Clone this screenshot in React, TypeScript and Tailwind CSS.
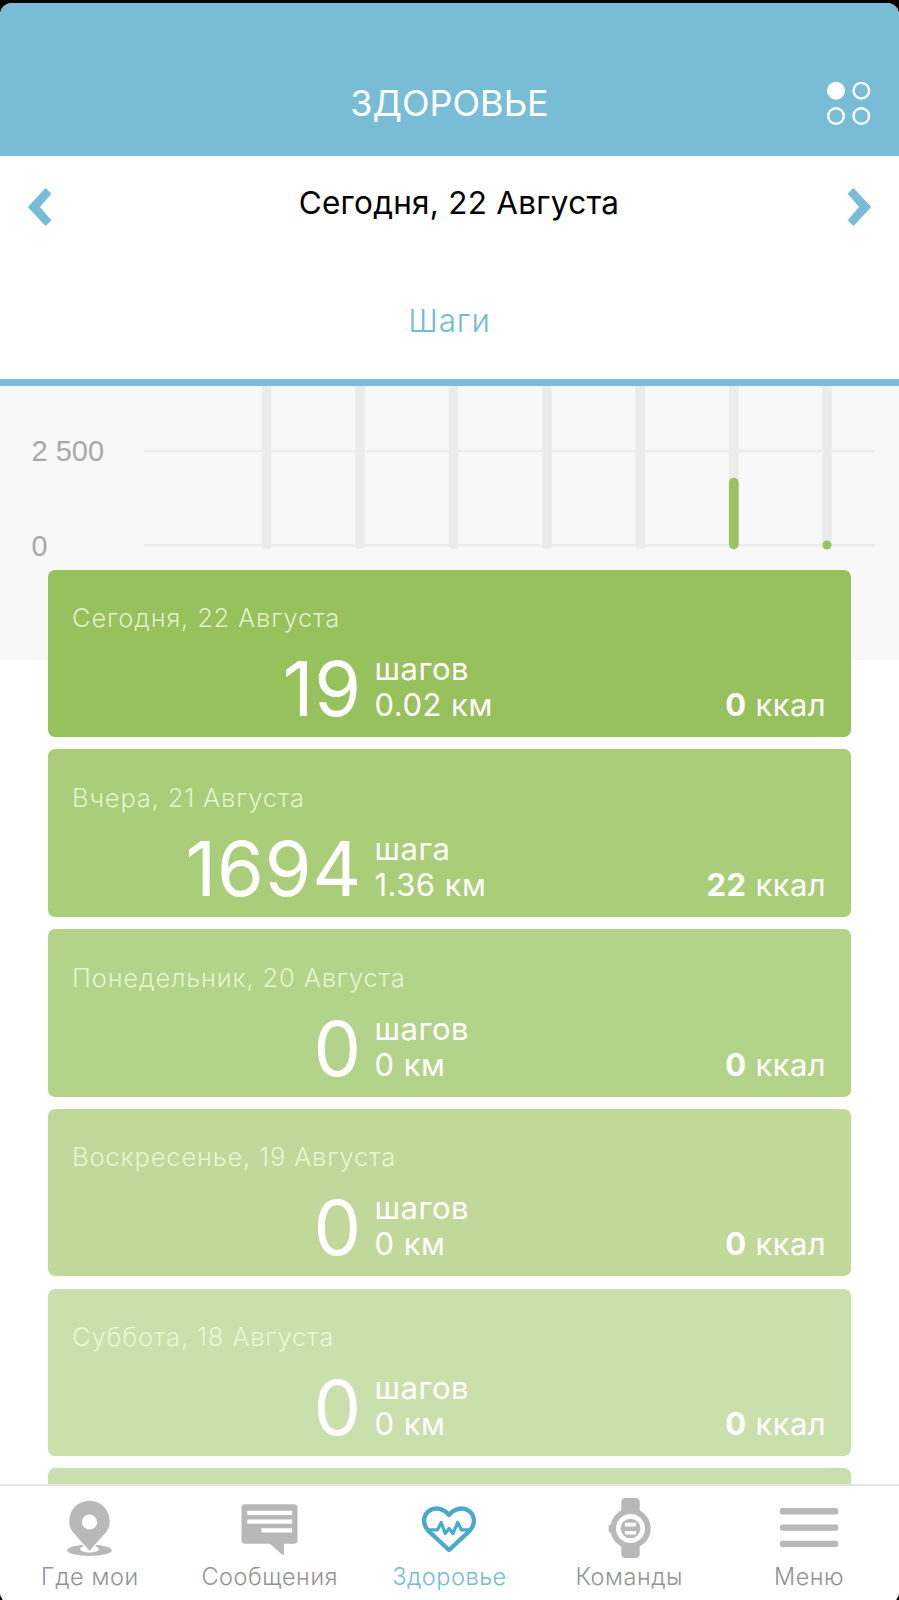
import type { ReactNode } from "react";
import clsx from "clsx";

type Day = {
  date: string;
  steps: number;
  unit: string;
  km: string;
  kcal: number;
  color: string;
};

const days: Day[] = [
  { date: "Сегодня, 22 Августа", steps: 19, unit: "шагов", km: "0.02 км", kcal: 0, color: "bg-[#96c15d]" },
  { date: "Вчера, 21 Августа", steps: 1694, unit: "шага", km: "1.36 км", kcal: 22, color: "bg-[#a9cd79]" },
  { date: "Понедельник, 20 Августа", steps: 0, unit: "шагов", km: "0 км", kcal: 0, color: "bg-[#b4d38a]" },
  { date: "Воскресенье, 19 Августа", steps: 0, unit: "шагов", km: "0 км", kcal: 0, color: "bg-[#c0d99a]" },
  { date: "Суббота, 18 Августа", steps: 0, unit: "шагов", km: "0 км", kcal: 0, color: "bg-[#cae0ac]" },
];

const columns = [266.7, 360.1, 453.5, 546.9, 640.3, 733.7, 827];

function Header() {
  return (
    <header className="grid h-[153px] grid-cols-[1fr_auto_1fr] items-start bg-[#78bdd5] pt-[79px]">
      <span />
      <h1 className="pt-px text-[36px] leading-[40px] text-white">ЗДОРОВЬЕ</h1>
      <svg width="46" height="46" viewBox="0 -1 46 46" className="mr-[27px] justify-self-end overflow-visible" fill="none" stroke="#fff" strokeWidth="2.4">
        <circle cx="10" cy="7.7" r="7.8" fill="#fff" />
        <circle cx="35.3" cy="7.7" r="7.8" />
        <circle cx="10" cy="33" r="7.8" />
        <circle cx="35.3" cy="33" r="7.8" />
      </svg>
    </header>
  );
}

function Arrow({ points }: { points: string }) {
  return (
    <svg width="24" height="38" viewBox="0 0 24 38" fill="#78bdd5" stroke="#78bdd5" strokeWidth="2.4" strokeLinejoin="round">
      <polygon points={points} />
    </svg>
  );
}

function DatePicker() {
  return (
    <div className="flex h-[101px] items-center justify-between px-[28px]">
      <Arrow points="17.6,1.6 21.8,5.8 10.4,19 21.8,32.2 17.6,36.4 1.4,19" />
      <span className="mb-[7px] ml-[19px] text-[31.5px] leading-[40px] tracking-[0.25px] text-black">Сегодня, 22 Августа</span>
      <Arrow points="6.4,1.6 2.2,5.8 13.6,19 2.2,32.2 6.4,36.4 22.6,19" />
    </div>
  );
}

function Chart() {
  return (
    <svg width="899" height="274" viewBox="0 386 899 274" className="block bg-[#f8f8f8]">
      <path d="M144 451.2H875M144 545.4H875" stroke="#ededed" strokeWidth="2.8" />
      <g fill="#ebebeb">
        {columns.map((x) => (
          <rect key={x} x={x - 4.8} y="370" width="9.6" height="178.6" rx="3" />
        ))}
      </g>
      <rect x="728.9" y="477.8" width="9.8" height="71.4" rx="4.9" fill="#9bc262" />
      <circle cx="827" cy="545" r="4.5" fill="#9bc262" />
      <g className="font-['Liberation_Sans',sans-serif]" fontSize="29.5" fill="#a9a9a9">
        <text x="31.5" y="461" textLength="72.5" lengthAdjust="spacingAndGlyphs">2 500</text>
        <text x="31.5" y="555.5" textLength="16" lengthAdjust="spacingAndGlyphs">0</text>
      </g>
    </svg>
  );
}

function DayCard({ day }: { day: Day }) {
  return (
    <article className={clsx("h-[167.5px] shrink-0 rounded-[7px] pt-[34.5px] pr-[25px] pl-[24px] text-white", day.color)}>
      <p className="text-[25.5px] leading-[28px] font-[350] tracking-[0.83px] text-[#f0fbdf]/85">{day.date}</p>
      <div className="mt-[19px] flex items-end text-[31px] leading-[36px]">
        <span className="w-[290px] text-right text-[75.6px] leading-[68px] tracking-[0.8px]">{day.steps}</span>
        <div className="ml-[12.5px] font-[370] tracking-[0.5px]">
          <p>{day.unit}</p>
          <p>{day.km}</p>
        </div>
        <p className="ml-auto font-[370] tracking-[0.4px]">
          <b className="font-bold">{day.kcal}</b> ккал
        </p>
      </div>
    </article>
  );
}

function Tab({ label, active, children }: { label: string; active?: boolean; children: ReactNode }) {
  return (
    <button
      className={clsx(
        "flex flex-1 basis-0 flex-col items-center pt-[12px] text-[23.5px] leading-[30px] font-[360] tracking-[0.55px] whitespace-nowrap",
        active ? "text-[#74bbd3]" : "text-[#939393]",
      )}
    >
      <svg width="60" height="60" viewBox="0 0 60 60" className="mb-[4px]" fill="#b8b8b8">
        {children}
      </svg>
      {label}
    </button>
  );
}

function TabBar() {
  return (
    <nav className="relative z-10 flex h-[120px] shrink-0 border-t-2 border-[#e3e3e3] bg-white">
      <Tab label="Где мои">
        <ellipse cx="29.5" cy="52.3" rx="22.2" ry="5.7" />
        <ellipse cx="29.5" cy="51" rx="9.4" ry="3.6" fill="#fff" />
        <path
          stroke="#fff"
          strokeWidth="2.5"
          paintOrder="stroke"
          d="M29.5 2.8c-11.2 0-20.2 9-20.2 20.2 0 4 1 7.2 2.8 10.2L29.5 52.8 46.9 33.2c1.8-3 2.8-6.2 2.8-10.2 0-11.2-9-20.2-20.2-20.2z"
        />
        <circle cx="29.5" cy="24" r="7.6" fill="#fff" />
      </Tab>
      <Tab label="Сообщения">
        <rect x="1.5" y="6.3" width="56" height="39.5" rx="3.5" />
        <path d="M29 45h15v11q-.3 1.500-2 .5z" />
        <g fill="#fff">
          <rect x="7.3" y="12.7" width="44.8" height="4.3" rx=".5" />
          <rect x="7.3" y="21.5" width="44.8" height="4.3" rx=".5" />
          <rect x="21.3" y="30.3" width="30.8" height="4.3" rx=".5" />
        </g>
      </Tab>
      <Tab label="Здоровье" active>
        <g fill="none" stroke="#4aa9ca" strokeWidth="4.4" strokeLinejoin="round" strokeLinecap="round">
          <path d="M30 52 L9.5 33 C2.5 25.5 4.5 16 11 12.3 C17.5 8.8 25.5 10.8 30 17 C34.5 10.8 42.5 8.8 49 12.3 C55.5 16 57.5 25.5 50.5 33 Z" />
          <path strokeWidth="3.2" d="M10 31.8H18.5L22.2 24.5 26.2 35.5 30.1 30.5 33.9 35.5 38.7 24.5 42.3 31.8H50" />
        </g>
      </Tab>
      <Tab label="Команды">
        <path d="M22.3 14V4q0-4 4-4h10.4q4 0 4 4v10zM22.3 46v10q0 4 4 4h10.4q4 0 4-4V46z" />
        <rect x="9.7" y="26.5" width="5" height="8.5" rx="2" />
        <circle cx="31.5" cy="30.5" r="20.2" />
        <circle cx="31.5" cy="30.5" r="14.5" fill="#fff" />
        <circle cx="31.5" cy="30.5" r="9.8" />
        <rect x="25.8" y="24.8" width="11.4" height="3.6" rx="1" fill="#fff" />
        <rect x="25.8" y="33" width="11.4" height="3.6" rx="1" fill="#fff" />
      </Tab>
      <Tab label="Меню">
        <rect x=".9" y="10.1" width="58.3" height="6.4" rx="2" />
        <rect x=".9" y="26.4" width="58.3" height="6.4" rx="2" />
        <rect x=".9" y="42.7" width="58.3" height="6.4" rx="2" />
      </Tab>
    </nav>
  );
}

export default function App() {
  return (
    <div className="h-[1600px] w-[899px] overflow-hidden bg-black pt-[3px] font-['Inter',sans-serif]">
      <div className="flex h-[1601px] flex-col overflow-hidden rounded-[12px] bg-white">
        <Header />
        <DatePicker />
        <div className="h-[129px] shrink-0 border-b-[7px] border-[#78bdd5] pt-[44px] text-center text-[31.5px] leading-[40px] font-[350] tracking-[0.8px] text-[#72bbd2]">
          Шаги
        </div>
        <main className="h-[1098px] shrink-0 overflow-hidden">
          <Chart />
          <div className="relative -mt-[90.5px] ml-[48px] flex w-[803px] flex-col gap-[12.3px]">
            {days.map((day) => (
              <DayCard key={day.date} day={day} />
            ))}
            <div className="h-[167.5px] shrink-0 rounded-[7px] bg-[#cae0ac]" />
          </div>
        </main>
        <TabBar />
      </div>
    </div>
  );
}
